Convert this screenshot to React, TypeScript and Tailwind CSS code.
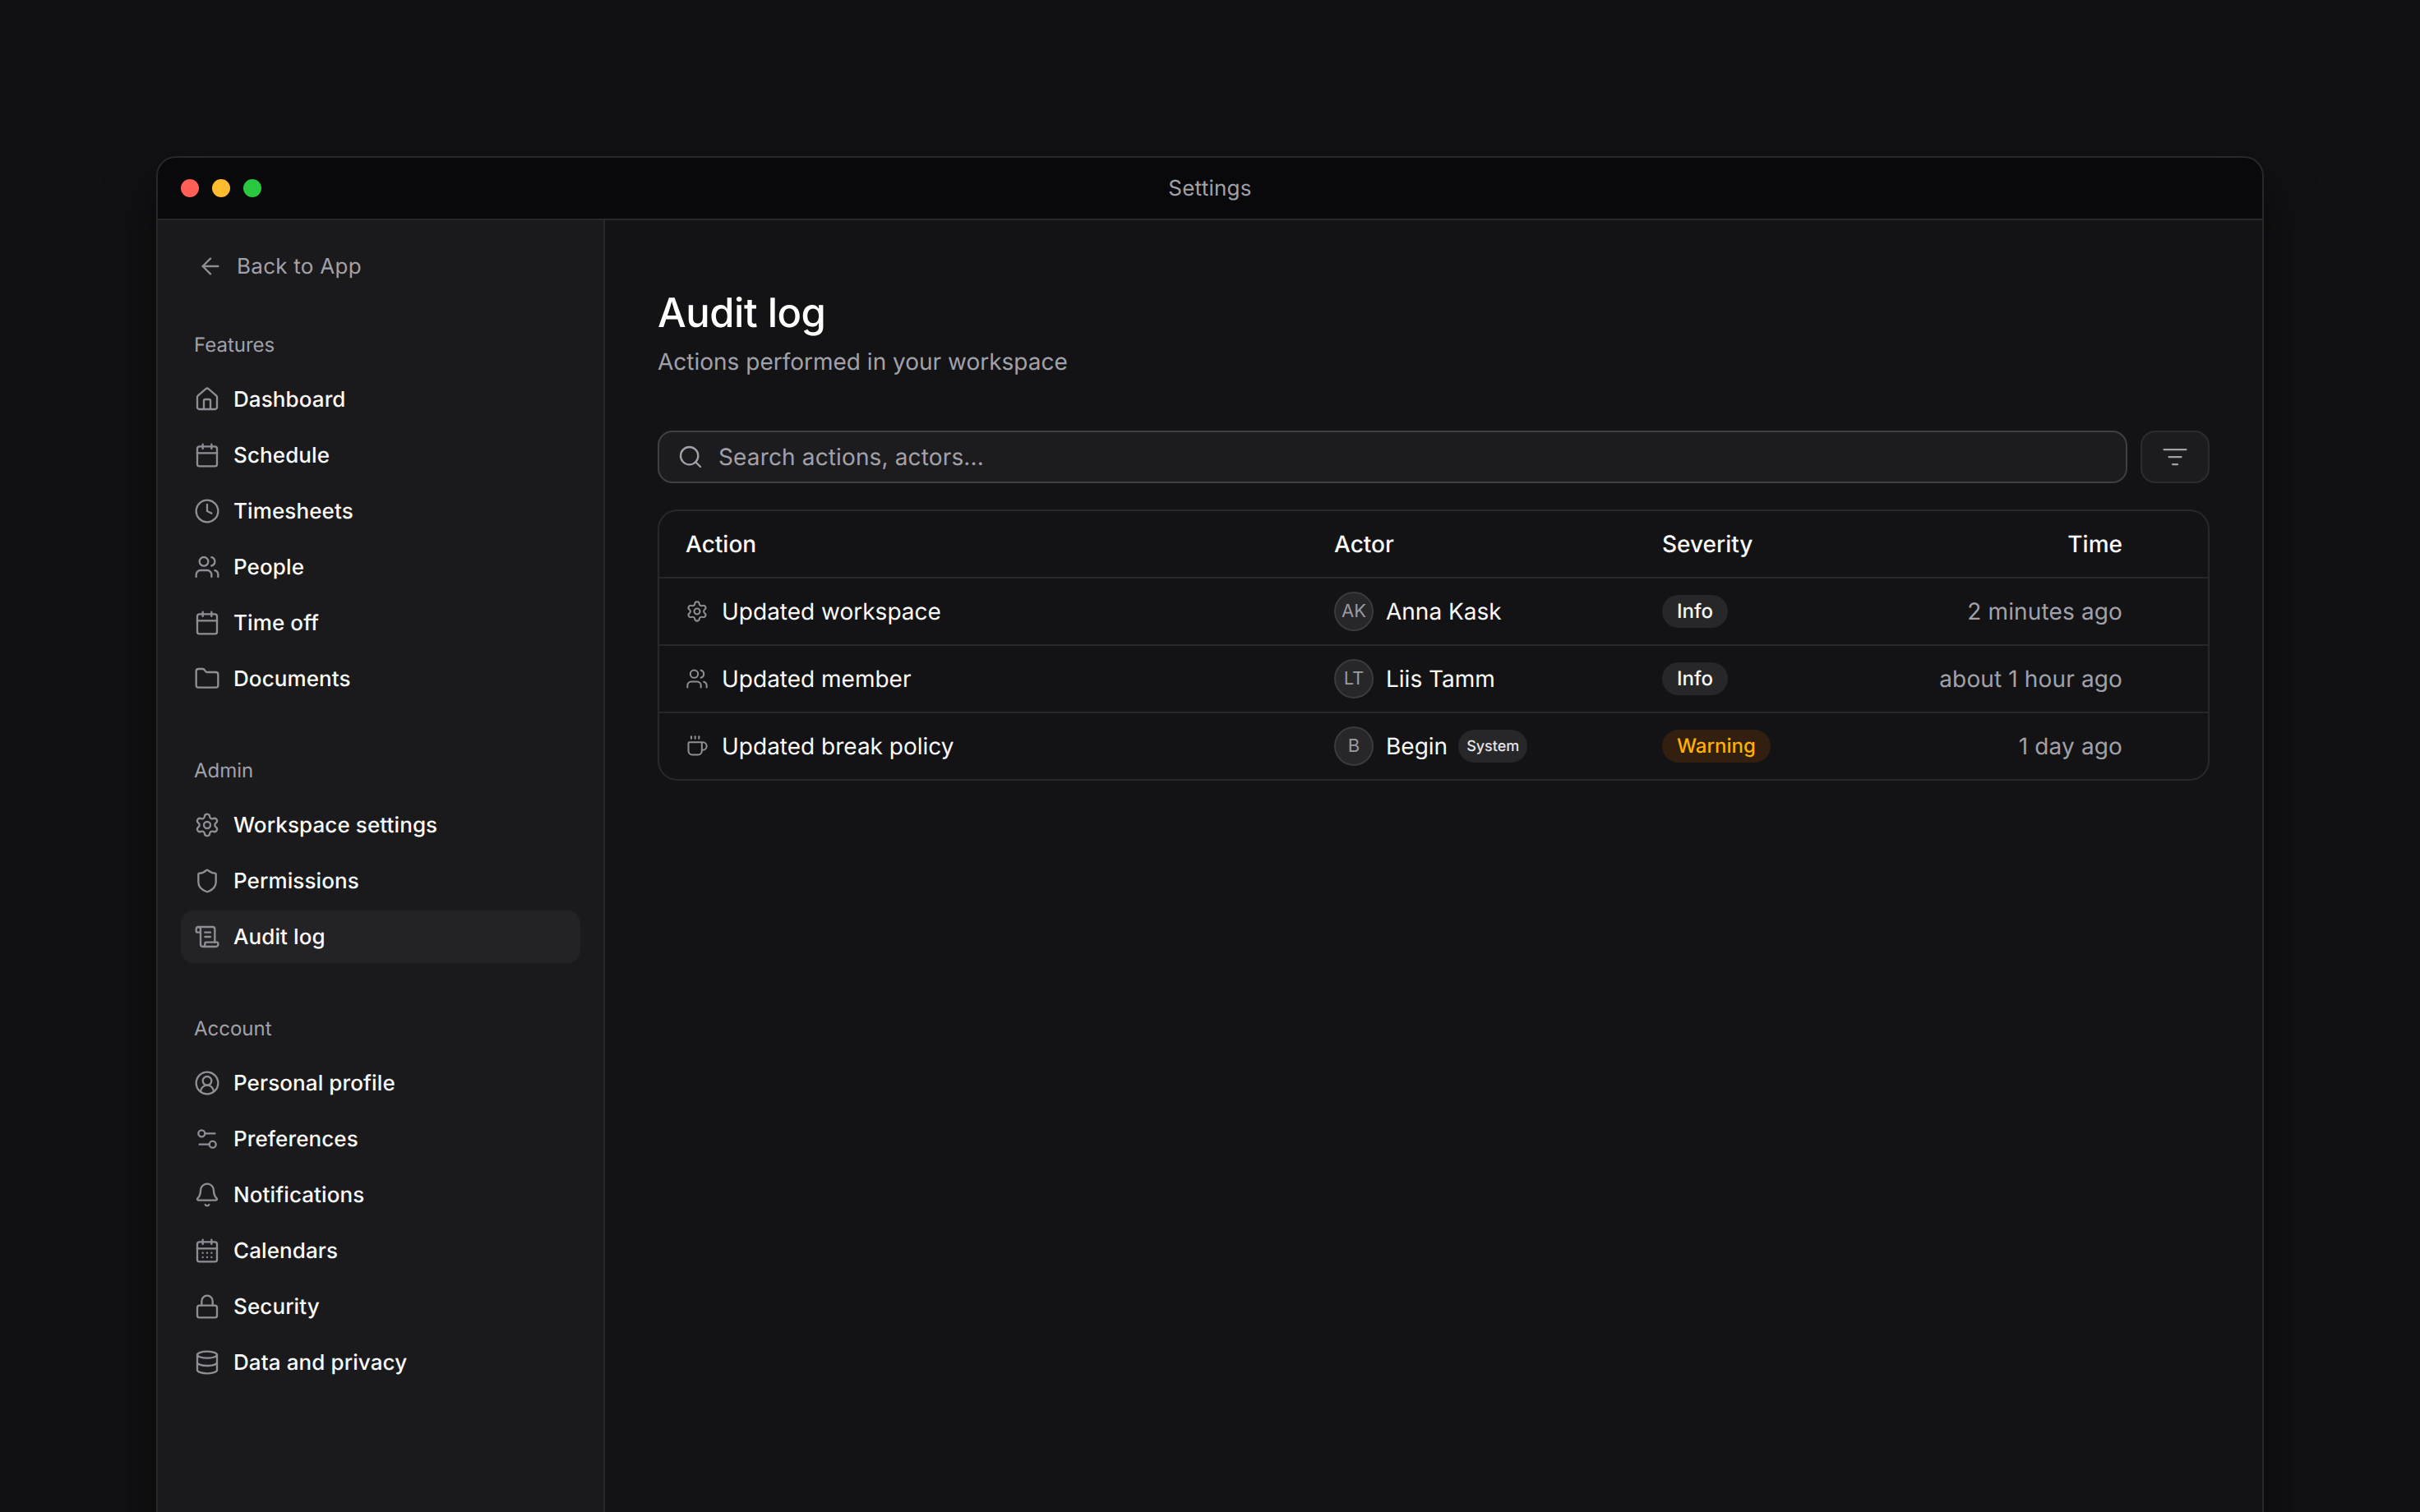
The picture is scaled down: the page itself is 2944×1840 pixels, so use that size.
import {
  ArrowLeft,
  Bell,
  Calendar,
  CalendarDays,
  CircleUserRound,
  Clock,
  Coffee,
  Database,
  Folder,
  House,
  Lock,
  ScrollText,
  Search,
  Settings,
  Settings2,
  Shield,
  Users,
} from 'lucide-react'
import type { LucideIcon } from 'lucide-react'

type NavItem = { label: string; icon: LucideIcon; active?: boolean }

const features: NavItem[] = [
  { label: 'Dashboard', icon: House },
  { label: 'Schedule', icon: Calendar },
  { label: 'Timesheets', icon: Clock },
  { label: 'People', icon: Users },
  { label: 'Time off', icon: Calendar },
  { label: 'Documents', icon: Folder },
]

const admin: NavItem[] = [
  { label: 'Workspace settings', icon: Settings },
  { label: 'Permissions', icon: Shield },
  { label: 'Audit log', icon: ScrollText, active: true },
]

const account: NavItem[] = [
  { label: 'Personal profile', icon: CircleUserRound },
  { label: 'Preferences', icon: Settings2 },
  { label: 'Notifications', icon: Bell },
  { label: 'Calendars', icon: CalendarDays },
  { label: 'Security', icon: Lock },
  { label: 'Data and privacy', icon: Database },
]

const rows = [
  { action: 'Updated workspace', icon: Settings, initials: 'AK', actor: 'Anna Kask', severity: 'Info', time: '2 minutes ago' },
  { action: 'Updated member', icon: Users, initials: 'LT', actor: 'Liis Tamm', severity: 'Info', time: 'about 1 hour ago' },
  { action: 'Updated break policy', icon: Coffee, initials: 'B', actor: 'Begin', system: true, severity: 'Warning', time: '1 day ago' },
]

function NavSection({ title, items, className }: { title: string; items: NavItem[]; className: string }) {
  return (
    <div className={className}>
      <div className="h-10 mb-[15px] pl-4 pt-[1px] flex items-center text-[24px] text-[#a1a1aa]">{title}</div>
      <div className="flex flex-col gap-1">
        {items.map((item) => (
          <div
            key={item.label}
            className={`h-16 pl-4 flex items-center gap-4 rounded-2xl text-[26px] font-[450] tracking-[0.004em] text-[#fafafa] ${item.active ? 'bg-[#232325]' : ''}`}
          >
            <item.icon size={32} strokeWidth={1.75} className="text-[#8e8e96] shrink-0" />
            {item.label}
          </div>
        ))}
      </div>
    </div>
  )
}

export default function App() {
  return (
    <div className="h-screen overflow-hidden bg-[#111113] pt-[190px] px-[190px] font-['Inter',sans-serif] antialiased [text-rendering:geometricPrecision]">
      <div className="h-[1700px] flex flex-col rounded-[24px] border-2 border-[#28282c] overflow-hidden shadow-[0_30px_60px_rgba(0,0,0,0.5)]">
        {/* Title bar */}
        <div className="relative h-[76px] shrink-0 flex items-center justify-center border-b-2 border-[#28282c] bg-[#09090b]">
          <div className="absolute left-7 flex gap-4">
            <span className="w-[22px] h-[22px] rounded-full bg-[#ff5f57]" />
            <span className="w-[22px] h-[22px] rounded-full bg-[#febc2e]" />
            <span className="w-[22px] h-[22px] rounded-full bg-[#28c840]" />
          </div>
          <span className="text-[26px] tracking-[0.01em] text-[#a1a1aa]">Settings</span>
        </div>

        <div className="flex flex-1 min-h-0">
          {/* Sidebar */}
          <aside className="w-[544px] shrink-0 pl-7 pr-[28px] pt-6 bg-[#1a1a1c] border-r-2 border-[#28282c]">
            <div className="h-16 pl-5 flex items-center gap-4 text-[26px] tracking-[0.01em] text-[#a1a1aa]">
              <ArrowLeft size={32} strokeWidth={1.75} className="text-[#8e8e96]" />
              Back to App
            </div>
            <NavSection title="Features" items={features} className="mt-[43px]" />
            <NavSection title="Admin" items={admin} className="mt-[59px]" />
            <NavSection title="Account" items={account} className="mt-[59px]" />
          </aside>

          {/* Main */}
          <main className="flex-1 px-16 pt-[81px] bg-[#131315]">
            <h1 className="h-[64px] flex items-center text-[49px] font-medium text-white tracking-[-0.01em]">Audit log</h1>
            <p className="mt-[7px] text-[28px] leading-[40px] text-[#a1a1aa]">Actions performed in your workspace</p>

            <div className="mt-16 flex gap-4">
              <div className="flex-1 h-16 pl-[22px] flex items-center gap-[18px] rounded-[18px] border-2 border-[#3f3f44] bg-[#1c1c1f]">
                <Search size={32} strokeWidth={1.75} className="text-[#a1a1aa]" />
                <span className="text-[28px] tracking-[0.005em] text-[#a1a1aa]">Search actions, actors...</span>
              </div>
              <div className="w-[84px] h-16 flex items-center justify-center rounded-[18px] border-2 border-[#2c2c30] bg-[#1c1c1f]">
                <svg width="36" height="36" viewBox="0 0 24 24" fill="none" stroke="#a1a1aa" strokeWidth="1.5" strokeLinecap="round">
                  <path d="M3 6h18" />
                  <path d="M7 12h10" />
                  <path d="M10 18h4" />
                </svg>
              </div>
            </div>

            <div className="mt-8 rounded-[24px] border-2 border-[#28282c] text-[28px]">
              <div className="grid grid-cols-[821px_399px_1fr_360px] h-[80px] items-center font-[450] text-[#fafafa]">
                <div className="pl-8">Action</div>
                <div>Actor</div>
                <div>Severity</div>
                <div className="pr-[104px] text-right">Time</div>
              </div>
              {rows.map((row) => (
                <div
                  key={row.action}
                  className="grid grid-cols-[821px_399px_1fr_360px] h-[82px] items-center border-t-2 border-[#28282c]"
                >
                  <div className="pl-8 flex items-center gap-4 text-[#fafafa]">
                    <row.icon size={28} strokeWidth={1.75} className="text-[#8e8e96]" />
                    {row.action}
                  </div>
                  <div className="flex items-center gap-[15px] text-[#fafafa]">
                    <span className="w-12 h-12 flex items-center justify-center rounded-full border-2 border-[#3a3a3f] bg-[#27272a] text-[22px] text-[#9a9aa2]">
                      {row.initials}
                    </span>
                    {row.actor}
                    {row.system && (
                      <span className="h-10 px-[10px] -ml-[2px] flex items-center rounded-full bg-[#27272a] text-[18px] font-[450] text-[#e4e4e7]">
                        System
                      </span>
                    )}
                  </div>
                  <div className="flex">
                    <span
                      className={`inline-flex h-10 px-[18px] items-center rounded-full text-[24px] font-[450] ${
                        row.severity === 'Warning' ? 'bg-[#331f10] text-[#ffb000]' : 'bg-[#27272a] text-[#fafafa]'
                      }`}
                    >
                      {row.severity}
                    </span>
                  </div>
                  <div className="pr-[104px] text-right tracking-[0.005em] text-[#a1a1aa]">{row.time}</div>
                </div>
              ))}
            </div>
          </main>
        </div>
      </div>
    </div>
  )
}
